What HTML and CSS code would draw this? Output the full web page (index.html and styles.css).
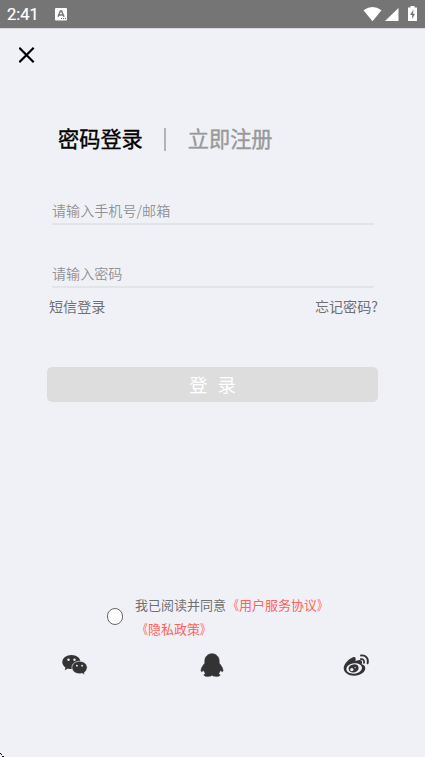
FILE: index.html
```html
<!DOCTYPE html>
<html lang="zh-CN">
<head>
<meta charset="utf-8">
<title>密码登录</title>
<link rel="stylesheet" href="styles.css">
</head>
<body>
<header class="status">
  <span class="clock">2:41</span>
  <svg class="app-badge" width="12" height="13" viewBox="0 0 12 13"><rect width="12" height="12.5" rx="1" fill="#fff"/><path d="M3 8.800 5.400 3h1.200L9 8.800M4.200 7h3.600" fill="none" stroke="#757575" stroke-width="1.500"/><path d="M6 10.600h1M8 10.600h1M10 10.600h1" stroke="#757575"/></svg>
  <svg class="indicators" width="54" height="16" viewBox="0 0 54 16"><path d="M.5 4.200Q9.500-2.200 18.500 4.200L9.500 15.200Z" fill="#fff"/><path d="M35.500 2v13H22Z" fill="#fff"/><path d="M47.500 0h4v1.500H54V15h-9V1.500h2.500Z" fill="#fff"/><path d="M50.500 3.500 47 9h2.200v4L52 7.700h-2Z" fill="#757575"/></svg>
</header>
<main class="page">
  <button class="close" aria-label="关闭"><svg width="16" height="16" viewBox="0 0 16 16"><path d="M.3.800 14.700 15.200M14.700.800.3 15.200" stroke="#000" stroke-width="2.200"/></svg></button>
  <nav class="tabs"><span class="tab active">密码登录</span><i class="divider"></i><span class="tab">立即注册</span></nav>
  <form class="form">
    <div class="field">请输入手机号/邮箱</div>
    <div class="field second">请输入密码</div>
    <div class="links"><span>短信登录</span><span>忘记密码?</span></div>
    <button class="submit" type="button"><span>登</span><span>录</span></button>
  </form>
  <section class="agreement">
    <i class="radio"></i>
    <p>我已阅读并同意<a><span class="mark open">《</span>用户服务协议<span class="mark">》</span></a><br><a><span class="mark open">《</span>隐私政策<span class="mark">》</span></a></p>
  </section>
  <footer class="social">
    <svg width="26" height="22" viewBox="0 0 26 22"><path d="M9.500 1C4.500 1 .3 4.100.3 8c0 2.300 1.300 4.200 3.200 5.500l-.8 2.700 3.200-1.700q1.500.5 3.600.5c5 0 9-3.100 9-7s-4-7-9-7Z" fill="#333"/><circle cx="6.500" cy="5.800" r="1.200" fill="#f0f1f7"/><circle cx="12.500" cy="5.800" r="1.200" fill="#f0f1f7"/><path d="M17.600 7.200c-4.300 0-7.700 2.800-7.700 6.300s3.400 6.300 7.700 6.300q1.300 0 2.500-.4l2.900 1.500-.7-2.400c1.800-1.200 2.900-3 2.900-5 0-3.500-3.300-6.300-7.600-6.300Z" fill="#333" stroke="#f0f1f7" stroke-width=".7"/><circle cx="14.900" cy="11.700" r=".9" fill="#f0f1f7"/><circle cx="20.100" cy="11.700" r=".9" fill="#f0f1f7"/></svg>
    <svg class="qq" width="24" height="24" viewBox="0 0 24 24"><path d="M12 .7C7.600.7 4.800 4 4.800 8.200v2C2.800 12.500 1 15.300 1 17.500c0 1.300.9 1.500 2.600-.3.400 1.400 1 2.400 2 3.400-1.300.5-1.600 1-1.600 1.500 0 1.800 6.500 1.600 8 .1 1.500 1.500 8 1.700 8-.1 0-.5-.3-1-1.600-1.500 1-1 1.600-2 2-3.400 1.700 1.800 2.600 1.600 2.600.3 0-2.200-1.800-5-3.800-7.300v-2C19.200 4 16.400.7 12 .7Z" fill="#333" stroke="#333" stroke-width=".6"/></svg>
    <svg width="27" height="23" viewBox="0 0 27 23"><path fill-rule="evenodd" d="M10 3.300C6.500 4.500.7 9.700.7 14.200c0 4.200 4.700 7.500 10.400 7.500 6.600 0 11.200-4 11.200-7.500 0-2.300-1.700-3.400-3.600-4 .9-2.400.1-4.400-2.700-4.100-1.300.1-2.500.6-3.600.9.700-2.300.3-4.600-2.400-3.700ZM11 9.200c4.500-.3 8 1.700 8 4.600s-3.400 5.600-7.800 5.900c-4.300.3-7.800-1.600-7.800-4.600s3.300-5.600 7.600-5.900Z" fill="#333"/><path fill-rule="evenodd" d="M10.500 10.400c-3 .3-5.200 2.300-4.800 4.800.4 2.400 2.700 3.600 5.400 3.200 2.900-.4 4.800-2.600 4.500-4.800-.3-2.300-2.400-3.500-5.100-3.200Zm-1.700 3.500a1.700 1.700 0 1 1 .1 3.400 1.700 1.700 0 0 1-.1-3.400Zm3.300-1a.7.700 0 1 1 0 1.400.7.700 0 0 1 0-1.400Z" fill="#333"/><path d="M17.800 5.200c2.300-.3 3.800 1.200 3.200 3.700M18 1.500c4.700-.7 8 3 6.600 7.900" fill="none" stroke="#333" stroke-width="1.800" stroke-linecap="round"/></svg>
  </footer>
</main>
<svg class="corner-mark" width="4" height="4" viewBox="0 0 4 4"><path d="M0 0h1v1h1v1H1V1H0ZM2 3h2v1H2Z"/></svg>
</body>
</html>
```
FILE: styles.css
```css
* { box-sizing: border-box; }
body {
  margin: 0;
  height: 757px;
  overflow: hidden;
  background: #f0f1f7;
  font-family: "Noto Sans CJK SC", sans-serif;
  color: #707072;
}
button { border: 0; padding: 0; font: inherit; }
svg { display: block; }
.status {
  display: flex;
  height: 29px;
  padding: 0 8px 0 7px;
  border-bottom: 1px solid #d8d8dc;
  background: #757575;
  background-clip: padding-box;
  color: #fff;
}
.clock {
  width: 48px;
  font: 400 16.5px/30px Roboto, sans-serif;
  -webkit-text-stroke: 0.2px currentColor;
}
.app-badge { margin-top: 8px; }
.indicators { margin: 6px 0 0 auto; }
.page { display: flex; flex-direction: column; }
.close {
  width: 16px;
  height: 16px;
  margin: 18px 0 0 19px;
  background: none;
}
.tabs {
  display: flex;
  align-items: center;
  height: 32px;
  margin: 59px 0 0 58px;
}
.tab {
  font-size: 21.2px;
  line-height: 32px;
  color: #999;
  -webkit-text-stroke: 0.4px currentColor;
}
.tab.active { color: #000; }
.divider {
  width: 2px;
  height: 23px;
  margin: 2px 22px 0 21px;
  background: #b3b3b6;
}
.form { margin: 43px 47px 0; }
.field {
  height: 28px;
  margin: 0 4px 0 5px;
  border-bottom: 2px solid #e3e4e8;
  font-size: 14.1px;
  line-height: 26px;
  font-weight: 350;
  color: #919195;
}
.field.second { margin-top: 35px; }
.links {
  display: flex;
  justify-content: space-between;
  margin: 7px 0 0 2px;
  font-size: 14.1px;
  line-height: 22px;
}
.submit {
  display: flex;
  justify-content: center;
  gap: 10px;
  width: 100%;
  height: 35px;
  margin-top: 50px;
  border-radius: 5px;
  background: #ddd;
  color: #fff;
  font-size: 18.5px;
  line-height: 35px;
}
.agreement {
  display: flex;
  align-items: center;
  margin: 190.5px 0 0 106.5px;
}
.radio {
  width: 16.5px;
  height: 16.5px;
  border: 1.5px solid #666;
  border-radius: 50%;
  background: #fff;
}
.agreement p {
  margin: 0 0 0 12px;
  font-size: 13px;
  line-height: 24px;
}
.agreement a { color: #ff6357; }
.mark {
  display: inline-block;
  width: 13px;
  transform: scaleX(.8);
  transform-origin: left;
}
.mark.open { transform-origin: right; }
.social {
  display: flex;
  justify-content: space-between;
  align-items: center;
  margin: 12.5px 55px 0 62px;
}
.qq { margin-right: 7px; }
.corner-mark { position: absolute; left: 0; bottom: 0; }
```
